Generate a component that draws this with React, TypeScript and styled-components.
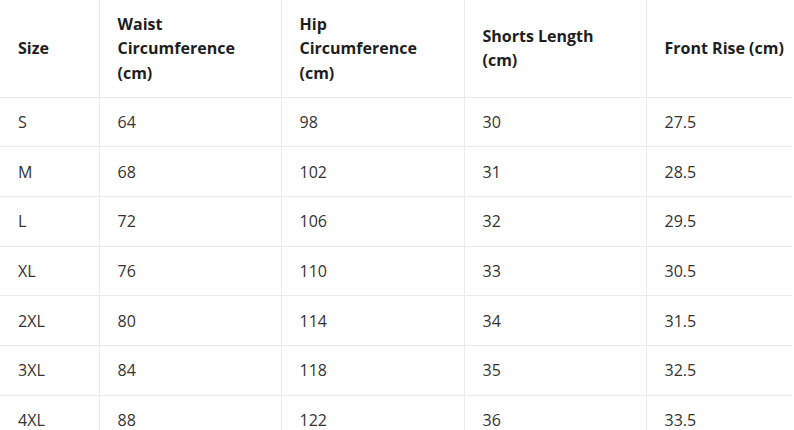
import React from "react";
import styled, { createGlobalStyle } from "styled-components";

const GlobalStyle = createGlobalStyle`
  html, body {
    margin: 0;
    padding: 0;
    background: #fff;
  }
  body {
    font-family: "Open Sans", "Noto Sans", Arial, sans-serif;
    overflow: hidden;
  }
`;

const SizeTable = styled.table`
  width: 792px;
  border-collapse: collapse;
  table-layout: fixed;
  font-size: 16px;
  color: #333;
`;

const HeadCell = styled.th<{ $width?: number }>`
  width: ${(p) => (p.$width ? `${p.$width}px` : "auto")};
  height: 97px;
  padding: 0 18px;
  box-sizing: border-box;
  text-align: left;
  font-weight: 700;
  line-height: 24.5px;
  color: #1e1e1e;
  white-space: nowrap;
  border-bottom: 1px solid #ebebeb;
  border-right: 1px solid #ebebeb;
  &:last-child {
    border-right: none;
    padding-right: 0;
  }
`;

const Cell = styled.td`
  height: 49.7px;
  padding: 0 18px;
  box-sizing: border-box;
  line-height: 22px;
  border-bottom: 1px solid #ebebeb;
  border-right: 1px solid #ebebeb;
  &:last-child {
    border-right: none;
  }
`;

const columns = [
  { lines: ["Size"], width: 99 },
  { lines: ["Waist", "Circumference", "(cm)"], width: 182 },
  { lines: ["Hip", "Circumference", "(cm)"], width: 183 },
  { lines: ["Shorts Length", "(cm)"], width: 182 },
  { lines: ["Front Rise (cm)"] },
];

const rows = [
  ["S", "64", "98", "30", "27.5"],
  ["M", "68", "102", "31", "28.5"],
  ["L", "72", "106", "32", "29.5"],
  ["XL", "76", "110", "33", "30.5"],
  ["2XL", "80", "114", "34", "31.5"],
  ["3XL", "84", "118", "35", "32.5"],
  ["4XL", "88", "122", "36", "33.5"],
];

const App: React.FC = () => {
  return (
    <>
      <GlobalStyle />
      <SizeTable>
        <thead>
          <tr>
            {columns.map((c) => (
              <HeadCell key={c.lines.join(" ")} $width={c.width}>
                {c.lines.map((l, i) => (
                  <React.Fragment key={l}>
                    {i > 0 && <br />}
                    {l}
                  </React.Fragment>
                ))}
              </HeadCell>
            ))}
          </tr>
        </thead>
        <tbody>
          {rows.map((r) => (
            <tr key={r[0]}>
              {r.map((v, i) => (
                <Cell key={i}>{v}</Cell>
              ))}
            </tr>
          ))}
        </tbody>
      </SizeTable>
    </>
  );
};

export default App;
